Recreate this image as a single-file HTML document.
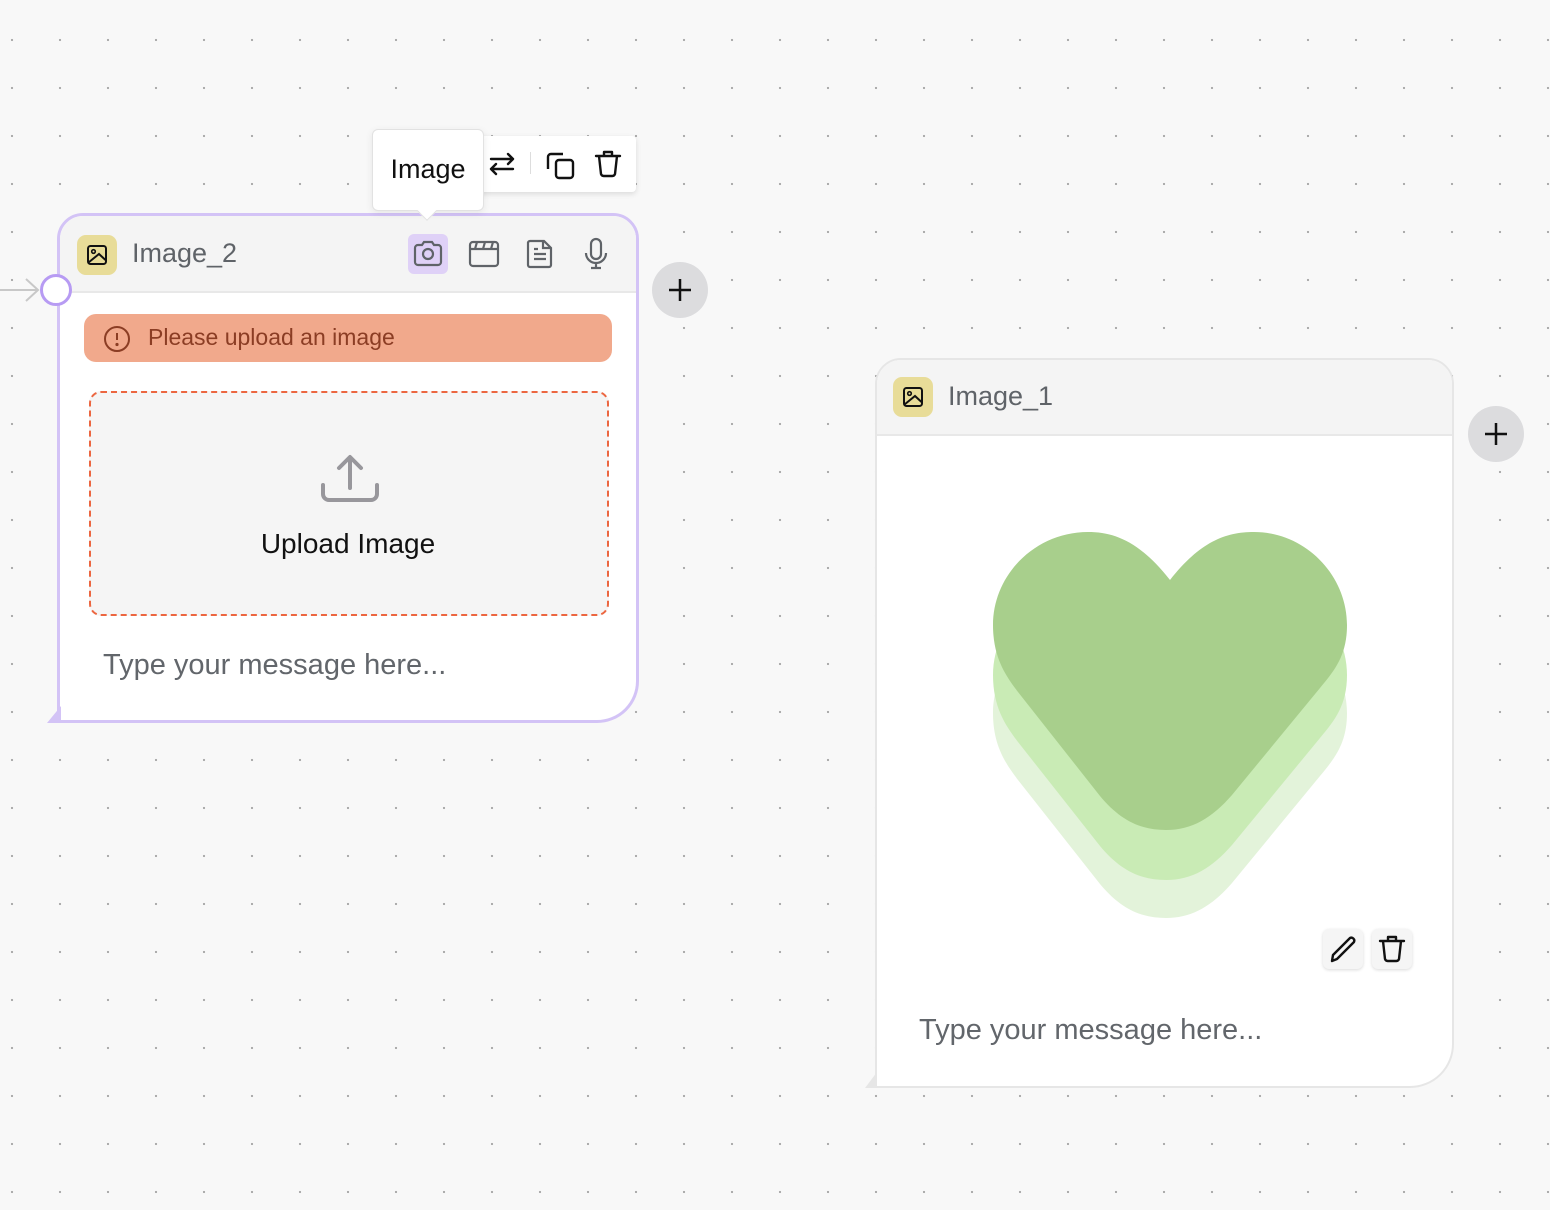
<!DOCTYPE html>
<html><head><meta charset="utf-8"><style>
*{box-sizing:border-box;margin:0;padding:0}
body{width:1550px;height:1210px;overflow:hidden;background-color:#f8f8f8;background-image:radial-gradient(circle,#a9a9a9 1px,transparent 1.3px);background-size:48px 48px;background-position:-12px 16px;font-family:"Liberation Sans",sans-serif;position:relative}
.abs{position:absolute}
.card{position:absolute;background:#fff;overflow:hidden}
.hdr{position:absolute;left:0;right:0;top:0;background:#f4f4f4;border-bottom:2px solid #e8e8e8}
.ico{position:absolute;width:40px;height:40px;border-radius:9px;background:#e8dc98}
.title{position:absolute;font-size:27px;color:#5f6368}
.ph{position:absolute;font-size:29px;color:#62666b}
.plus{position:absolute;width:56px;height:56px;border-radius:50%;background:#dcdcde}
</style></head><body>

<svg class="abs" style="left:0;top:270px" width="60" height="40"><path d="M0 20H38M26 9L38 20L26 31" stroke="#c8c8c8" stroke-width="2" fill="none"/></svg>

<div class="card" style="left:57px;top:213px;width:582px;height:510px;border:3px solid #d3c3f6;border-radius:26px 26px 42px 0">
  <div class="hdr" style="height:77px"></div>
  <div class="ico" style="left:17px;top:19px"><svg width="40" height="40" viewBox="0 0 40 40"><rect x="11" y="11" width="18" height="18" rx="2.5" fill="none" stroke="#111" stroke-width="2"/><circle cx="16.5" cy="16.5" r="1.8" fill="none" stroke="#111" stroke-width="1.6"/><path d="M11.5 27.5L22 19L28.5 25" fill="none" stroke="#111" stroke-width="2"/></svg></div>
  <div class="title" style="left:72px;top:22px">Image_2</div>
  <div class="abs" style="left:348px;top:18px;width:40px;height:40px;border-radius:6px;background:#dfd1f7"></div>
  <svg class="abs" style="left:348px;top:18px" width="40" height="40" viewBox="0 0 40 40" fill="none" stroke="#5f6368" stroke-width="2.2"><path d="M7 14a3 3 0 0 1 3-3h4l2-3h8l2 3h4a3 3 0 0 1 3 3v14a3 3 0 0 1-3 3H10a3 3 0 0 1-3-3z"/><circle cx="20" cy="20" r="5"/></svg>
  <svg class="abs" style="left:404px;top:18px" width="40" height="40" viewBox="0 0 40 40" fill="none" stroke="#5f6368" stroke-width="2.2"><rect x="6" y="8" width="28" height="24" rx="3"/><path d="M6 15H34M13 8L11 15M21 8L19 15M29 8L27 15"/></svg>
  <svg class="abs" style="left:460px;top:18px" width="40" height="40" viewBox="0 0 40 40" fill="none" stroke="#5f6368" stroke-width="2.2"><path d="M10 7h14l7 7v17a2 2 0 0 1-2 2H10a2 2 0 0 1-2-2V9a2 2 0 0 1 2-2z"/><path d="M23 7v7h8M14 20h12M14 25h12M14 15h4"/></svg>
  <svg class="abs" style="left:516px;top:18px" width="40" height="40" viewBox="0 0 40 40" fill="none" stroke="#5f6368" stroke-width="2.2"><rect x="15" y="5" width="10" height="20" rx="5"/><path d="M10 19a10 10 0 0 0 20 0M20 29v5M15 34h10"/></svg>

  <div class="abs" style="left:24px;top:98px;width:528px;height:48px;border-radius:12px;background:#f1a98c"></div>
  <svg class="abs" style="left:42px;top:108px" width="30" height="30" viewBox="0 0 30 30" fill="none" stroke="#8b3d24" stroke-width="2"><circle cx="15" cy="15" r="12"/><path d="M15 9v7"/><circle cx="15" cy="20.5" r="0.6" fill="#8b3d24"/></svg>
  <div class="abs" style="left:88px;top:108px;font-size:23px;color:#8b3d24">Please upload an image</div>

  <div class="abs" style="left:29px;top:175px;width:520px;height:225px;border:2px dashed #ec6640;border-radius:12px;background:#f5f5f5"></div>
  <svg class="abs" style="left:258px;top:232px" width="64" height="64" viewBox="0 0 64 64" fill="none" stroke="#98979c" stroke-width="4" stroke-linecap="round" stroke-linejoin="round"><path d="M32 40V10M21 20L32 9L43 20M5 37v9a6 6 0 0 0 6 6h42a6 6 0 0 0 6-6v-9"/></svg>
  <div class="abs" style="left:0;width:576px;top:312px;text-align:center;font-size:28px;color:#111">Upload Image</div>
  <div class="ph" style="left:43px;top:433px">Type your message here...</div>
</div>
<div class="abs" style="left:47px;top:706px;width:14px;height:17px;background:#d3c3f6;clip-path:polygon(100% 0,100% 100%,0 100%)"></div>
<div class="abs" style="left:40px;top:274px;width:32px;height:32px;border-radius:50%;background:#fff;border:3px solid #b79bf3"></div>
<div class="plus" style="left:652px;top:262px"><svg width="56" height="56"><path d="M28 17V39M17 28H39" stroke="#111" stroke-width="2.5"/></svg></div>

<div class="abs" style="left:440px;top:136px;width:196px;height:56px;background:#fff;border-radius:4px;box-shadow:0 2px 6px rgba(0,0,0,.12)"></div>
<svg class="abs" style="left:486px;top:148px" width="32" height="32" viewBox="0 0 32 32" fill="none" stroke="#111" stroke-width="2.4" stroke-linecap="round" stroke-linejoin="round"><path d="M5 11H27M22 6L27 11L22 16M27 21H5M10 16L5 21L10 26"/></svg>
<div class="abs" style="left:530px;top:152px;width:1px;height:22px;background:#ddd"></div>
<svg class="abs" style="left:543px;top:148px" width="34" height="34" viewBox="0 0 34 34" fill="none" stroke="#111" stroke-width="2.4" stroke-linejoin="round"><rect x="13" y="12" width="17" height="18" rx="3"/><path d="M20 6H8a3 3 0 0 0-3 3v12"/></svg>
<svg class="abs" style="left:592px;top:148px" width="32" height="32" viewBox="0 0 32 32" fill="none" stroke="#111" stroke-width="2.4" stroke-linecap="round" stroke-linejoin="round"><path d="M4 8H28M12 8V4H20V8M7 8L9 26a3 3 0 0 0 3 2h8a3 3 0 0 0 3-2L25 8"/></svg>
<div class="abs" style="left:372px;top:129px;width:112px;height:82px;background:#fff;border:1px solid #e2e2e2;border-radius:6px;box-shadow:0 2px 8px rgba(0,0,0,.08)"></div>
<div class="abs" style="left:420px;top:204px;width:14px;height:14px;background:#fff;transform:rotate(45deg);border-right:1px solid #e2e2e2;border-bottom:1px solid #e2e2e2"></div>
<div class="abs" style="left:372px;top:154px;width:112px;text-align:center;font-size:27px;color:#111">Image</div>

<div class="card" style="left:875px;top:358px;width:579px;height:730px;border:2px solid #e6e6e6;border-radius:26px 26px 44px 0">
  <div class="hdr" style="height:76px"></div>
  <div class="ico" style="left:16px;top:17px"><svg width="40" height="40" viewBox="0 0 40 40"><rect x="11" y="11" width="18" height="18" rx="2.5" fill="none" stroke="#111" stroke-width="2"/><circle cx="16.5" cy="16.5" r="1.8" fill="none" stroke="#111" stroke-width="1.6"/><path d="M11.5 27.5L22 19L28.5 25" fill="none" stroke="#111" stroke-width="2"/></svg></div>
  <div class="title" style="left:71px;top:21px">Image_1</div>
  <div class="ph" style="left:42px;top:654px">Type your message here...</div>
</div>
<div class="abs" style="left:865px;top:1072px;width:12px;height:16px;background:#e6e6e6;clip-path:polygon(100% 0,100% 100%,0 100%)"></div>
<svg class="abs" style="left:0;top:0" width="1550" height="1210">
<defs><path id="h" d="M1170,580 C1140,542 1115,532 1088,532 C1035,532 993,575 993,625 C993,658 1006,676 1018,692 L1100,796 C1120,820 1140,830 1166,830 C1192,830 1212,818 1232,795 L1320,688 C1335,670 1347,655 1347,625 C1347,575 1305,532 1254,532 C1225,532 1200,542 1170,580 Z"/></defs>
<use href="#h" y="88" fill="#e3f3da"/>
<use href="#h" y="50" fill="#c9ebb5"/>
<use href="#h" fill="#a8cf8c"/>
</svg>
<div class="abs" style="left:1323px;top:929px;width:40px;height:40px;border-radius:6px;background:#f5f5f5;box-shadow:0 1px 3px rgba(0,0,0,.15)"></div>
<svg class="abs" style="left:1323px;top:929px" width="40" height="40" viewBox="0 0 40 40" fill="none" stroke="#111" stroke-width="2.4" stroke-linejoin="round"><path d="M9 32L10 26L27 9a3 3 0 0 1 4 4L14 30z"/></svg>
<div class="abs" style="left:1372px;top:929px;width:40px;height:40px;border-radius:6px;background:#f5f5f5;box-shadow:0 1px 3px rgba(0,0,0,.15)"></div>
<svg class="abs" style="left:1376px;top:933px" width="32" height="32" viewBox="0 0 32 32" fill="none" stroke="#111" stroke-width="2.4" stroke-linecap="round" stroke-linejoin="round"><path d="M4 8H28M12 8V4H20V8M7 8L9 26a3 3 0 0 0 3 2h8a3 3 0 0 0 3-2L25 8"/></svg>
<div class="plus" style="left:1468px;top:406px"><svg width="56" height="56"><path d="M28 17V39M17 28H39" stroke="#111" stroke-width="2.5"/></svg></div>
</body></html>
